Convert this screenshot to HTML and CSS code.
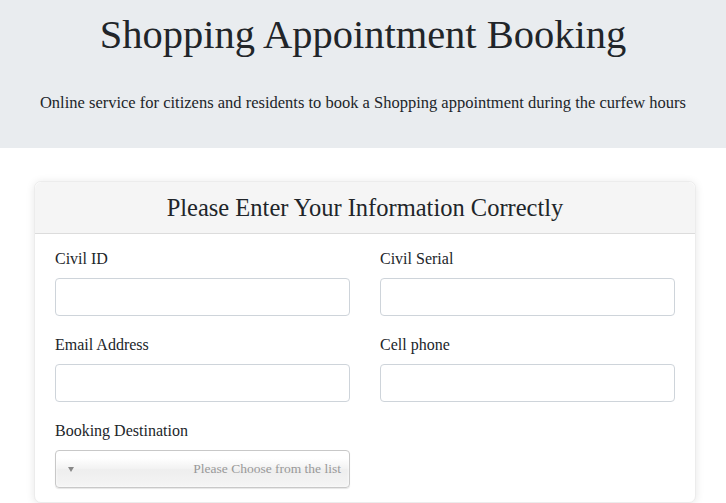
FILE: index.html
```html
<!DOCTYPE html>
<html lang="en">
<head>
    <meta charset="UTF-8">
    <meta name="viewport" content="width=device-width, initial-scale=1.0">
    <title>Shopping Appointment Booking</title>
    <link rel="stylesheet" href="styles.css">
</head>
<body>
    <header class="jumbo">
        <h1>Shopping Appointment Booking</h1>
        <p class="lead">Online service for citizens and residents to book a Shopping appointment during the curfew hours</p>
    </header>

    <div class="container">
        <div class="card">
            <div class="card-header">Please Enter Your Information Correctly</div>
            <form class="card-body">
                <div class="field">
                    <label for="civilId">Civil ID</label>
                    <input type="text" id="civilId" name="civil_id">
                </div>
                <div class="field">
                    <label for="civilSerial">Civil Serial</label>
                    <input type="text" id="civilSerial" name="civil_serial">
                </div>
                <div class="field">
                    <label for="email">Email Address</label>
                    <input type="text" id="email" name="email">
                </div>
                <div class="field">
                    <label for="phone">Cell phone</label>
                    <input type="text" id="phone" name="phone">
                </div>
                <div class="field">
                    <label>Booking Destination</label>
                    <div class="chosen">
                        <span class="arrow"></span>
                        <span class="placeholder">Please Choose from the list</span>
                    </div>
                </div>
            </form>
        </div>
    </div>
</body>
</html>
```

FILE: styles.css
```css
body {
    font-family: "Liberation Serif", "Times New Roman", serif;
    margin: 0;
    padding: 0;
    color: #212529;
    background-color: white;
}
.jumbo {
    background-color: #e9ecef;
    text-align: center;
    padding: 11px 0 33px;
}
h1 {
    font-size: 40.5px;
    font-weight: normal;
    line-height: 48px;
    margin: 0;
}
.lead {
    font-size: 16.5px;
    line-height: 24px;
    margin: 32px 0 0;
}
.container {
    padding: 33px 30px 0 34px;
}
.card {
    border: 1px solid #ececec;
    border-radius: 7px;
    box-shadow: 0 1px 8px rgba(0, 0, 0, 0.1);
    background-color: white;
}
.card-header {
    background-color: #f5f5f5;
    border-bottom: 1px solid #dcdcdc;
    border-radius: 7px 7px 0 0;
    text-align: center;
    font-size: 24.5px;
    height: 51px;
    line-height: 51px;
}
.card-body {
    display: grid;
    grid-template-columns: 1fr 1fr;
    column-gap: 30px;
    row-gap: 18px;
    padding: 14px 20px 14px;
}
.field {
    display: flex;
    flex-direction: column;
}
label {
    font-size: 16px;
    line-height: 22px;
    margin-bottom: 8px;
}
input {
    height: 38px;
    box-sizing: border-box;
    border: 1px solid #ced4da;
    border-radius: 4px;
    background-color: white;
    font-family: inherit;
    font-size: 16px;
    padding: 6px 12px;
}
.chosen {
    height: 38px;
    box-sizing: border-box;
    border: 1px solid #c8c8c8;
    border-radius: 4px;
    background: linear-gradient(#ffffff 20%, #f2f2f2 50%, #eeeeee 52%, #f4f4f4 100%);
    box-shadow: 0 0 3px white inset, 0 1px 1px rgba(0, 0, 0, 0.1);
    display: flex;
    align-items: center;
    justify-content: space-between;
    padding: 0 8px 0 12px;
}
.arrow {
    width: 0;
    height: 0;
    border-left: 3px solid transparent;
    border-right: 3px solid transparent;
    border-top: 5px solid #888;
}
.placeholder {
    color: #999;
    font-size: 13.5px;
}
```
